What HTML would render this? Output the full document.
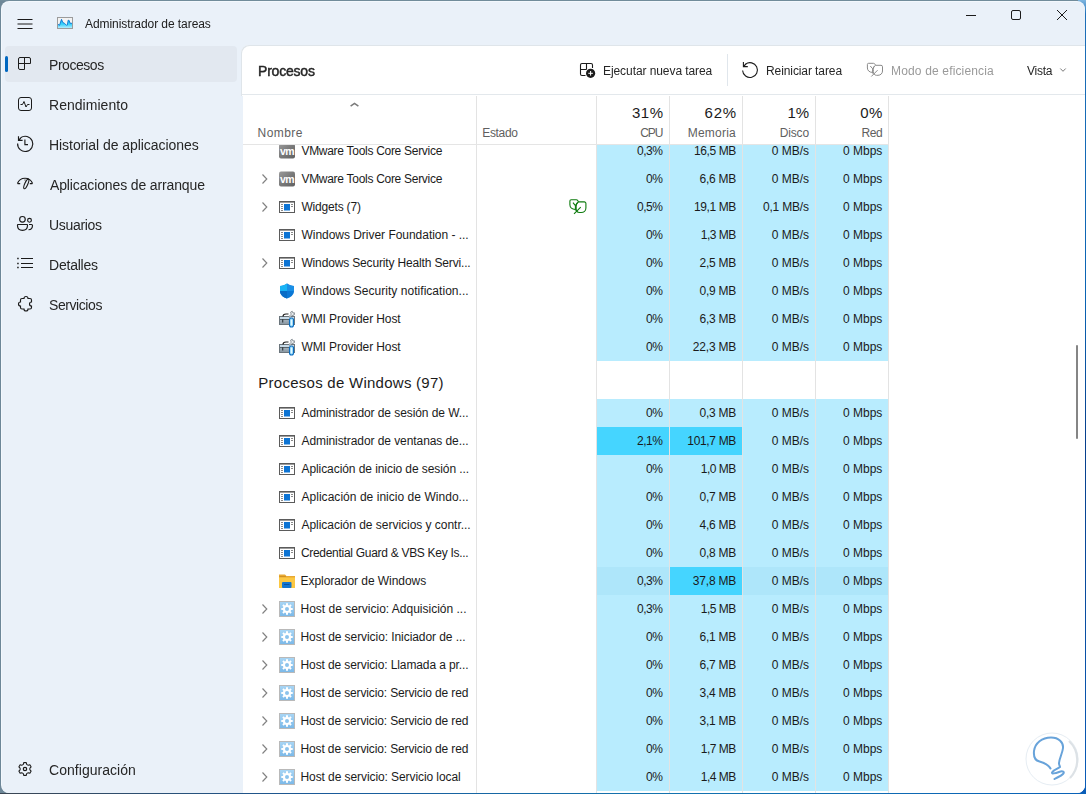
<!DOCTYPE html>
<html><head><meta charset="utf-8"><style>
html,body{margin:0;padding:0;width:1086px;height:794px;overflow:hidden}
body{background:#6d8798;position:relative;font-family:"Liberation Sans",sans-serif}
.t{position:absolute;white-space:pre;font-family:"Liberation Sans",sans-serif}
.a{position:absolute}
svg{position:absolute;overflow:visible}
</style></head><body>
<div class="a" style="left:1070px;top:0;width:16px;height:794px;background:linear-gradient(180deg,#7fb6e0 0px,#1d6fb8 14px,#0a64b4 300px,#073f8c 440px,#0a5cb8 794px)"></div>
<div class="a" style="left:0;top:793px;width:1086px;height:1px;background:linear-gradient(90deg,#3b4652 0%,#1a5a9a 30%,#1474ae 60%,#0a62b8 100%)"></div>
<div class="a" style="left:0;top:0;width:1078px;height:1px;background:#718c9b"></div>
<div class="a" style="left:1px;top:1px;width:1084px;height:792px;background:#f3f8fd;border-radius:8px"></div>
<div class="a" style="left:2px;top:2px;width:1083px;height:791px;background:#eaf1f9;border-radius:7px 8px 8px 7px"></div>
<div class="a" style="left:241px;top:45px;width:844px;height:51px;background:#ffffff;border-top-left-radius:8px;box-shadow:inset 1px 1px 0 #dfe5ea"></div>
<div class="a" style="left:243px;top:95px;width:842px;height:698px;background:#ffffff;border-bottom-right-radius:8px"></div>
<div class="a" style="left:5px;top:46px;width:232px;height:36px;background:#e2e8f0;border-radius:4px"></div>
<div class="a" style="left:5px;top:56px;width:3px;height:16px;background:#0067c0;border-radius:2px"></div>

<div class="a" style="left:597px;top:137px;width:72px;height:28px;background:#b8ecfe"></div>
<div class="a" style="left:670px;top:137px;width:72px;height:28px;background:#b8ecfe"></div>
<div class="a" style="left:743px;top:137px;width:72px;height:28px;background:#b8ecfe"></div>
<div class="a" style="left:816px;top:137px;width:72px;height:28px;background:#b8ecfe"></div>
<div class="a" style="left:597px;top:165px;width:72px;height:28px;background:#b8ecfe"></div>
<div class="a" style="left:670px;top:165px;width:72px;height:28px;background:#b8ecfe"></div>
<div class="a" style="left:743px;top:165px;width:72px;height:28px;background:#b8ecfe"></div>
<div class="a" style="left:816px;top:165px;width:72px;height:28px;background:#b8ecfe"></div>
<div class="a" style="left:597px;top:193px;width:72px;height:28px;background:#b8ecfe"></div>
<div class="a" style="left:670px;top:193px;width:72px;height:28px;background:#b8ecfe"></div>
<div class="a" style="left:743px;top:193px;width:72px;height:28px;background:#b8ecfe"></div>
<div class="a" style="left:816px;top:193px;width:72px;height:28px;background:#b8ecfe"></div>
<div class="a" style="left:597px;top:221px;width:72px;height:28px;background:#b8ecfe"></div>
<div class="a" style="left:670px;top:221px;width:72px;height:28px;background:#b8ecfe"></div>
<div class="a" style="left:743px;top:221px;width:72px;height:28px;background:#b8ecfe"></div>
<div class="a" style="left:816px;top:221px;width:72px;height:28px;background:#b8ecfe"></div>
<div class="a" style="left:597px;top:249px;width:72px;height:28px;background:#b8ecfe"></div>
<div class="a" style="left:670px;top:249px;width:72px;height:28px;background:#b8ecfe"></div>
<div class="a" style="left:743px;top:249px;width:72px;height:28px;background:#b8ecfe"></div>
<div class="a" style="left:816px;top:249px;width:72px;height:28px;background:#b8ecfe"></div>
<div class="a" style="left:597px;top:277px;width:72px;height:28px;background:#b8ecfe"></div>
<div class="a" style="left:670px;top:277px;width:72px;height:28px;background:#b8ecfe"></div>
<div class="a" style="left:743px;top:277px;width:72px;height:28px;background:#b8ecfe"></div>
<div class="a" style="left:816px;top:277px;width:72px;height:28px;background:#b8ecfe"></div>
<div class="a" style="left:597px;top:305px;width:72px;height:28px;background:#b8ecfe"></div>
<div class="a" style="left:670px;top:305px;width:72px;height:28px;background:#b8ecfe"></div>
<div class="a" style="left:743px;top:305px;width:72px;height:28px;background:#b8ecfe"></div>
<div class="a" style="left:816px;top:305px;width:72px;height:28px;background:#b8ecfe"></div>
<div class="a" style="left:597px;top:333px;width:72px;height:28px;background:#b8ecfe"></div>
<div class="a" style="left:670px;top:333px;width:72px;height:28px;background:#b8ecfe"></div>
<div class="a" style="left:743px;top:333px;width:72px;height:28px;background:#b8ecfe"></div>
<div class="a" style="left:816px;top:333px;width:72px;height:28px;background:#b8ecfe"></div>
<div class="a" style="left:597px;top:399px;width:72px;height:28px;background:#b8ecfe"></div>
<div class="a" style="left:670px;top:399px;width:72px;height:28px;background:#b8ecfe"></div>
<div class="a" style="left:743px;top:399px;width:72px;height:28px;background:#b8ecfe"></div>
<div class="a" style="left:816px;top:399px;width:72px;height:28px;background:#b8ecfe"></div>
<div class="a" style="left:597px;top:427px;width:72px;height:28px;background:#45d5ff"></div>
<div class="a" style="left:670px;top:427px;width:72px;height:28px;background:#45d5ff"></div>
<div class="a" style="left:743px;top:427px;width:72px;height:28px;background:#b8ecfe"></div>
<div class="a" style="left:816px;top:427px;width:72px;height:28px;background:#b8ecfe"></div>
<div class="a" style="left:597px;top:455px;width:72px;height:28px;background:#b8ecfe"></div>
<div class="a" style="left:670px;top:455px;width:72px;height:28px;background:#b8ecfe"></div>
<div class="a" style="left:743px;top:455px;width:72px;height:28px;background:#b8ecfe"></div>
<div class="a" style="left:816px;top:455px;width:72px;height:28px;background:#b8ecfe"></div>
<div class="a" style="left:597px;top:483px;width:72px;height:28px;background:#b8ecfe"></div>
<div class="a" style="left:670px;top:483px;width:72px;height:28px;background:#b8ecfe"></div>
<div class="a" style="left:743px;top:483px;width:72px;height:28px;background:#b8ecfe"></div>
<div class="a" style="left:816px;top:483px;width:72px;height:28px;background:#b8ecfe"></div>
<div class="a" style="left:597px;top:511px;width:72px;height:28px;background:#b8ecfe"></div>
<div class="a" style="left:670px;top:511px;width:72px;height:28px;background:#b8ecfe"></div>
<div class="a" style="left:743px;top:511px;width:72px;height:28px;background:#b8ecfe"></div>
<div class="a" style="left:816px;top:511px;width:72px;height:28px;background:#b8ecfe"></div>
<div class="a" style="left:597px;top:539px;width:72px;height:28px;background:#b8ecfe"></div>
<div class="a" style="left:670px;top:539px;width:72px;height:28px;background:#b8ecfe"></div>
<div class="a" style="left:743px;top:539px;width:72px;height:28px;background:#b8ecfe"></div>
<div class="a" style="left:816px;top:539px;width:72px;height:28px;background:#b8ecfe"></div>
<div class="a" style="left:597px;top:567px;width:72px;height:28px;background:#aee6fa"></div>
<div class="a" style="left:670px;top:567px;width:72px;height:28px;background:#45d5ff"></div>
<div class="a" style="left:743px;top:567px;width:72px;height:28px;background:#aee6fa"></div>
<div class="a" style="left:816px;top:567px;width:72px;height:28px;background:#aee6fa"></div>
<div class="a" style="left:597px;top:595px;width:72px;height:28px;background:#b8ecfe"></div>
<div class="a" style="left:670px;top:595px;width:72px;height:28px;background:#b8ecfe"></div>
<div class="a" style="left:743px;top:595px;width:72px;height:28px;background:#b8ecfe"></div>
<div class="a" style="left:816px;top:595px;width:72px;height:28px;background:#b8ecfe"></div>
<div class="a" style="left:597px;top:623px;width:72px;height:28px;background:#b8ecfe"></div>
<div class="a" style="left:670px;top:623px;width:72px;height:28px;background:#b8ecfe"></div>
<div class="a" style="left:743px;top:623px;width:72px;height:28px;background:#b8ecfe"></div>
<div class="a" style="left:816px;top:623px;width:72px;height:28px;background:#b8ecfe"></div>
<div class="a" style="left:597px;top:651px;width:72px;height:28px;background:#b8ecfe"></div>
<div class="a" style="left:670px;top:651px;width:72px;height:28px;background:#b8ecfe"></div>
<div class="a" style="left:743px;top:651px;width:72px;height:28px;background:#b8ecfe"></div>
<div class="a" style="left:816px;top:651px;width:72px;height:28px;background:#b8ecfe"></div>
<div class="a" style="left:597px;top:679px;width:72px;height:28px;background:#b8ecfe"></div>
<div class="a" style="left:670px;top:679px;width:72px;height:28px;background:#b8ecfe"></div>
<div class="a" style="left:743px;top:679px;width:72px;height:28px;background:#b8ecfe"></div>
<div class="a" style="left:816px;top:679px;width:72px;height:28px;background:#b8ecfe"></div>
<div class="a" style="left:597px;top:707px;width:72px;height:28px;background:#b8ecfe"></div>
<div class="a" style="left:670px;top:707px;width:72px;height:28px;background:#b8ecfe"></div>
<div class="a" style="left:743px;top:707px;width:72px;height:28px;background:#b8ecfe"></div>
<div class="a" style="left:816px;top:707px;width:72px;height:28px;background:#b8ecfe"></div>
<div class="a" style="left:597px;top:735px;width:72px;height:28px;background:#b8ecfe"></div>
<div class="a" style="left:670px;top:735px;width:72px;height:28px;background:#b8ecfe"></div>
<div class="a" style="left:743px;top:735px;width:72px;height:28px;background:#b8ecfe"></div>
<div class="a" style="left:816px;top:735px;width:72px;height:28px;background:#b8ecfe"></div>
<div class="a" style="left:597px;top:763px;width:72px;height:28px;background:#b8ecfe"></div>
<div class="a" style="left:670px;top:763px;width:72px;height:28px;background:#b8ecfe"></div>
<div class="a" style="left:743px;top:763px;width:72px;height:28px;background:#b8ecfe"></div>
<div class="a" style="left:816px;top:763px;width:72px;height:28px;background:#b8ecfe"></div>
<div class="a" style="left:476px;top:96px;width:1px;height:697px;background:#e3e3e3"></div>
<div class="a" style="left:596px;top:96px;width:1px;height:697px;background:#e3e3e3"></div>
<div class="a" style="left:669px;top:96px;width:1px;height:697px;background:#e3e3e3"></div>
<div class="a" style="left:742px;top:96px;width:1px;height:697px;background:#e3e3e3"></div>
<div class="a" style="left:815px;top:96px;width:1px;height:697px;background:#e3e3e3"></div>
<div class="a" style="left:888px;top:96px;width:1px;height:697px;background:#e3e3e3"></div>
<svg style="left:279px;top:143px" width="16" height="16" viewBox="279 143 16 16"><defs><linearGradient id="vmg151" x1="0" y1="0" x2="1" y2="1"><stop offset="0" stop-color="#9a9a9a"/><stop offset="0.5" stop-color="#7a7a7a"/><stop offset="1" stop-color="#606060"/></linearGradient></defs>
<rect x="279" y="143.5" width="16" height="15" rx="2" fill="url(#vmg151)"/>
<text x="287" y="154.5" font-family="Liberation Sans" font-weight="700" font-size="10.5" fill="#fff" text-anchor="middle" letter-spacing="-0.6">vm</text></svg>
<svg style="left:258px;top:172px" width="14" height="14" viewBox="258 172 14 14"><path d="M262.5 174.5L266.8 179.0L262.5 183.5" fill="none" stroke="#808080" stroke-width="1.15"/></svg>
<svg style="left:279px;top:171px" width="16" height="16" viewBox="279 171 16 16"><defs><linearGradient id="vmg179" x1="0" y1="0" x2="1" y2="1"><stop offset="0" stop-color="#9a9a9a"/><stop offset="0.5" stop-color="#7a7a7a"/><stop offset="1" stop-color="#606060"/></linearGradient></defs>
<rect x="279" y="171.5" width="16" height="15" rx="2" fill="url(#vmg179)"/>
<text x="287" y="182.5" font-family="Liberation Sans" font-weight="700" font-size="10.5" fill="#fff" text-anchor="middle" letter-spacing="-0.6">vm</text></svg>
<svg style="left:258px;top:200px" width="14" height="14" viewBox="258 200 14 14"><path d="M262.5 202.5L266.8 207.0L262.5 211.5" fill="none" stroke="#808080" stroke-width="1.15"/></svg>
<svg style="left:279px;top:199px" width="16" height="16" viewBox="279 199 16 16"><rect x="279.5" y="201.5" width="15" height="11" fill="#fff" stroke="#5b5b5b" stroke-width="1"/>
<rect x="280" y="201" width="14" height="1.6" fill="#5b5b5b"/>
<rect x="284" y="204" width="6" height="6.5" fill="#0d74d4"/>
<path d="M281 204.5H283M281 206.5H283M281 208.5H283M281 210.5H283M291 204.5H293M291 206.5H293" stroke="#8a8a8a" stroke-width="1"/></svg>
<svg style="left:279px;top:227px" width="16" height="16" viewBox="279 227 16 16"><rect x="279.5" y="229.5" width="15" height="11" fill="#fff" stroke="#5b5b5b" stroke-width="1"/>
<rect x="280" y="229" width="14" height="1.6" fill="#5b5b5b"/>
<rect x="284" y="232" width="6" height="6.5" fill="#0d74d4"/>
<path d="M281 232.5H283M281 234.5H283M281 236.5H283M281 238.5H283M291 232.5H293M291 234.5H293" stroke="#8a8a8a" stroke-width="1"/></svg>
<svg style="left:258px;top:256px" width="14" height="14" viewBox="258 256 14 14"><path d="M262.5 258.5L266.8 263.0L262.5 267.5" fill="none" stroke="#808080" stroke-width="1.15"/></svg>
<svg style="left:279px;top:255px" width="16" height="16" viewBox="279 255 16 16"><rect x="279.5" y="257.5" width="15" height="11" fill="#fff" stroke="#5b5b5b" stroke-width="1"/>
<rect x="280" y="257" width="14" height="1.6" fill="#5b5b5b"/>
<rect x="284" y="260" width="6" height="6.5" fill="#0d74d4"/>
<path d="M281 260.5H283M281 262.5H283M281 264.5H283M281 266.5H283M291 260.5H293M291 262.5H293" stroke="#8a8a8a" stroke-width="1"/></svg>
<svg style="left:279px;top:283px" width="16" height="16" viewBox="279 283 16 16"><path d="M287 283.5C289 285 291.5 286 294 286V291C294 295 290.5 297.5 287 298.5C283.5 297.5 280 295 280 291V286C282.5 286 285 285 287 283.5Z" fill="#0a78d6"/>
<path d="M287 283.5C285 285 282.5 286 280 286V291H287Z" fill="#19b4f5"/>
<path d="M287 283.5C289 285 291.5 286 294 286V291H287Z" fill="#1a8fe6"/>
<path d="M280 291C280 295 283.5 297.5 287 298.5V291Z" fill="#0a6cc6"/></svg>
<svg style="left:279px;top:311px" width="16" height="16" viewBox="279 311 16 16"><defs><linearGradient id="wg319" x1="0" y1="0" x2="0" y2="1"><stop offset="0" stop-color="#b9c6cf"/><stop offset="1" stop-color="#8795a0"/></linearGradient></defs>
<rect x="279.5" y="316.5" width="15" height="8" fill="url(#wg319)" stroke="#6b757c" stroke-width="1"/>
<rect x="280" y="317" width="14" height="2" fill="#c9dbe8"/>
<path d="M280 319.5H294" stroke="#59636a" stroke-width="1"/>
<rect x="282" y="319" width="1.3" height="3.5" fill="#3d454b"/>
<path d="M283 316.5C283 314.8 284.5 314 286 314H288.5" fill="none" stroke="#222" stroke-width="1.2"/>
<path d="M288.8 316.8L291.2 314.2L290.6 312.2L292.2 311.2L293 313L294.5 312.8L294.2 315L292 315.6L289.8 317.6Z" fill="#e9edf0" stroke="#737c83" stroke-width="0.8"/>
<rect x="289.5" y="318" width="4" height="9" rx="2" fill="#a8e3fb" stroke="#0a6cc0" stroke-width="1.1"/>
<rect x="291" y="320" width="1" height="5" fill="#e6f8ff"/></svg>
<svg style="left:279px;top:339px" width="16" height="16" viewBox="279 339 16 16"><defs><linearGradient id="wg347" x1="0" y1="0" x2="0" y2="1"><stop offset="0" stop-color="#b9c6cf"/><stop offset="1" stop-color="#8795a0"/></linearGradient></defs>
<rect x="279.5" y="344.5" width="15" height="8" fill="url(#wg347)" stroke="#6b757c" stroke-width="1"/>
<rect x="280" y="345" width="14" height="2" fill="#c9dbe8"/>
<path d="M280 347.5H294" stroke="#59636a" stroke-width="1"/>
<rect x="282" y="347" width="1.3" height="3.5" fill="#3d454b"/>
<path d="M283 344.5C283 342.8 284.5 342 286 342H288.5" fill="none" stroke="#222" stroke-width="1.2"/>
<path d="M288.8 344.8L291.2 342.2L290.6 340.2L292.2 339.2L293 341L294.5 340.8L294.2 343L292 343.6L289.8 345.6Z" fill="#e9edf0" stroke="#737c83" stroke-width="0.8"/>
<rect x="289.5" y="346" width="4" height="9" rx="2" fill="#a8e3fb" stroke="#0a6cc0" stroke-width="1.1"/>
<rect x="291" y="348" width="1" height="5" fill="#e6f8ff"/></svg>
<svg style="left:279px;top:405px" width="16" height="16" viewBox="279 405 16 16"><rect x="279.5" y="407.5" width="15" height="11" fill="#fff" stroke="#5b5b5b" stroke-width="1"/>
<rect x="280" y="407" width="14" height="1.6" fill="#5b5b5b"/>
<rect x="284" y="410" width="6" height="6.5" fill="#0d74d4"/>
<path d="M281 410.5H283M281 412.5H283M281 414.5H283M281 416.5H283M291 410.5H293M291 412.5H293" stroke="#8a8a8a" stroke-width="1"/></svg>
<svg style="left:279px;top:433px" width="16" height="16" viewBox="279 433 16 16"><rect x="279.5" y="435.5" width="15" height="11" fill="#fff" stroke="#5b5b5b" stroke-width="1"/>
<rect x="280" y="435" width="14" height="1.6" fill="#5b5b5b"/>
<rect x="284" y="438" width="6" height="6.5" fill="#0d74d4"/>
<path d="M281 438.5H283M281 440.5H283M281 442.5H283M281 444.5H283M291 438.5H293M291 440.5H293" stroke="#8a8a8a" stroke-width="1"/></svg>
<svg style="left:279px;top:461px" width="16" height="16" viewBox="279 461 16 16"><rect x="279.5" y="463.5" width="15" height="11" fill="#fff" stroke="#5b5b5b" stroke-width="1"/>
<rect x="280" y="463" width="14" height="1.6" fill="#5b5b5b"/>
<rect x="284" y="466" width="6" height="6.5" fill="#0d74d4"/>
<path d="M281 466.5H283M281 468.5H283M281 470.5H283M281 472.5H283M291 466.5H293M291 468.5H293" stroke="#8a8a8a" stroke-width="1"/></svg>
<svg style="left:279px;top:489px" width="16" height="16" viewBox="279 489 16 16"><rect x="279.5" y="491.5" width="15" height="11" fill="#fff" stroke="#5b5b5b" stroke-width="1"/>
<rect x="280" y="491" width="14" height="1.6" fill="#5b5b5b"/>
<rect x="284" y="494" width="6" height="6.5" fill="#0d74d4"/>
<path d="M281 494.5H283M281 496.5H283M281 498.5H283M281 500.5H283M291 494.5H293M291 496.5H293" stroke="#8a8a8a" stroke-width="1"/></svg>
<svg style="left:279px;top:517px" width="16" height="16" viewBox="279 517 16 16"><rect x="279.5" y="519.5" width="15" height="11" fill="#fff" stroke="#5b5b5b" stroke-width="1"/>
<rect x="280" y="519" width="14" height="1.6" fill="#5b5b5b"/>
<rect x="284" y="522" width="6" height="6.5" fill="#0d74d4"/>
<path d="M281 522.5H283M281 524.5H283M281 526.5H283M281 528.5H283M291 522.5H293M291 524.5H293" stroke="#8a8a8a" stroke-width="1"/></svg>
<svg style="left:279px;top:545px" width="16" height="16" viewBox="279 545 16 16"><rect x="279.5" y="547.5" width="15" height="11" fill="#fff" stroke="#5b5b5b" stroke-width="1"/>
<rect x="280" y="547" width="14" height="1.6" fill="#5b5b5b"/>
<rect x="284" y="550" width="6" height="6.5" fill="#0d74d4"/>
<path d="M281 550.5H283M281 552.5H283M281 554.5H283M281 556.5H283M291 550.5H293M291 552.5H293" stroke="#8a8a8a" stroke-width="1"/></svg>
<svg style="left:279px;top:573px" width="16" height="16" viewBox="279 573 16 16"><path d="M279 574.5H285L286.5 576H295V588H279Z" fill="#e8a934"/>
<path d="M279 577.5H295V588H279Z" fill="#fcc843"/>
<rect x="279.5" y="576" width="6.5" height="0.8" fill="#c98a20"/>
<rect x="282" y="582" width="9.5" height="6" rx="1" fill="#1375d0"/>
<rect x="284" y="584" width="5.5" height="0.9" fill="#0a4f9a"/></svg>
<svg style="left:258px;top:602px" width="14" height="14" viewBox="258 602 14 14"><path d="M262.5 604.5L266.8 609.0L262.5 613.5" fill="none" stroke="#808080" stroke-width="1.15"/></svg>
<svg style="left:279px;top:601px" width="16" height="16" viewBox="279 601 16 16"><defs><linearGradient id="gg609" x1="0" y1="0" x2="0" y2="1"><stop offset="0" stop-color="#a9d6f5"/><stop offset="1" stop-color="#7ab8e8"/></linearGradient></defs>
<rect x="279.5" y="601.5" width="15" height="15" fill="url(#gg609)" stroke="#b9b9b9" stroke-width="1"/>
<path d="M286.00 603.29 L288.00 603.29 L287.98 604.92 L289.19 605.42 L290.34 604.25 L291.75 605.66 L290.58 606.81 L291.08 608.02 L292.71 608.00 L292.71 610.00 L291.08 609.98 L290.58 611.19 L291.75 612.34 L290.34 613.75 L289.19 612.58 L287.98 613.08 L288.00 614.71 L286.00 614.71 L286.02 613.08 L284.81 612.58 L283.66 613.75 L282.25 612.34 L283.42 611.19 L282.92 609.98 L281.29 610.00 L281.29 608.00 L282.92 608.02 L283.42 606.81 L282.25 605.66 L283.66 604.25 L284.81 605.42 L286.02 604.92Z" fill="#fff"/><circle cx="287" cy="609" r="2" fill="#8cc3ec"/></svg>
<svg style="left:258px;top:630px" width="14" height="14" viewBox="258 630 14 14"><path d="M262.5 632.5L266.8 637.0L262.5 641.5" fill="none" stroke="#808080" stroke-width="1.15"/></svg>
<svg style="left:279px;top:629px" width="16" height="16" viewBox="279 629 16 16"><defs><linearGradient id="gg637" x1="0" y1="0" x2="0" y2="1"><stop offset="0" stop-color="#a9d6f5"/><stop offset="1" stop-color="#7ab8e8"/></linearGradient></defs>
<rect x="279.5" y="629.5" width="15" height="15" fill="url(#gg637)" stroke="#b9b9b9" stroke-width="1"/>
<path d="M286.00 631.29 L288.00 631.29 L287.98 632.92 L289.19 633.42 L290.34 632.25 L291.75 633.66 L290.58 634.81 L291.08 636.02 L292.71 636.00 L292.71 638.00 L291.08 637.98 L290.58 639.19 L291.75 640.34 L290.34 641.75 L289.19 640.58 L287.98 641.08 L288.00 642.71 L286.00 642.71 L286.02 641.08 L284.81 640.58 L283.66 641.75 L282.25 640.34 L283.42 639.19 L282.92 637.98 L281.29 638.00 L281.29 636.00 L282.92 636.02 L283.42 634.81 L282.25 633.66 L283.66 632.25 L284.81 633.42 L286.02 632.92Z" fill="#fff"/><circle cx="287" cy="637" r="2" fill="#8cc3ec"/></svg>
<svg style="left:258px;top:658px" width="14" height="14" viewBox="258 658 14 14"><path d="M262.5 660.5L266.8 665.0L262.5 669.5" fill="none" stroke="#808080" stroke-width="1.15"/></svg>
<svg style="left:279px;top:657px" width="16" height="16" viewBox="279 657 16 16"><defs><linearGradient id="gg665" x1="0" y1="0" x2="0" y2="1"><stop offset="0" stop-color="#a9d6f5"/><stop offset="1" stop-color="#7ab8e8"/></linearGradient></defs>
<rect x="279.5" y="657.5" width="15" height="15" fill="url(#gg665)" stroke="#b9b9b9" stroke-width="1"/>
<path d="M286.00 659.29 L288.00 659.29 L287.98 660.92 L289.19 661.42 L290.34 660.25 L291.75 661.66 L290.58 662.81 L291.08 664.02 L292.71 664.00 L292.71 666.00 L291.08 665.98 L290.58 667.19 L291.75 668.34 L290.34 669.75 L289.19 668.58 L287.98 669.08 L288.00 670.71 L286.00 670.71 L286.02 669.08 L284.81 668.58 L283.66 669.75 L282.25 668.34 L283.42 667.19 L282.92 665.98 L281.29 666.00 L281.29 664.00 L282.92 664.02 L283.42 662.81 L282.25 661.66 L283.66 660.25 L284.81 661.42 L286.02 660.92Z" fill="#fff"/><circle cx="287" cy="665" r="2" fill="#8cc3ec"/></svg>
<svg style="left:258px;top:686px" width="14" height="14" viewBox="258 686 14 14"><path d="M262.5 688.5L266.8 693.0L262.5 697.5" fill="none" stroke="#808080" stroke-width="1.15"/></svg>
<svg style="left:279px;top:685px" width="16" height="16" viewBox="279 685 16 16"><defs><linearGradient id="gg693" x1="0" y1="0" x2="0" y2="1"><stop offset="0" stop-color="#a9d6f5"/><stop offset="1" stop-color="#7ab8e8"/></linearGradient></defs>
<rect x="279.5" y="685.5" width="15" height="15" fill="url(#gg693)" stroke="#b9b9b9" stroke-width="1"/>
<path d="M286.00 687.29 L288.00 687.29 L287.98 688.92 L289.19 689.42 L290.34 688.25 L291.75 689.66 L290.58 690.81 L291.08 692.02 L292.71 692.00 L292.71 694.00 L291.08 693.98 L290.58 695.19 L291.75 696.34 L290.34 697.75 L289.19 696.58 L287.98 697.08 L288.00 698.71 L286.00 698.71 L286.02 697.08 L284.81 696.58 L283.66 697.75 L282.25 696.34 L283.42 695.19 L282.92 693.98 L281.29 694.00 L281.29 692.00 L282.92 692.02 L283.42 690.81 L282.25 689.66 L283.66 688.25 L284.81 689.42 L286.02 688.92Z" fill="#fff"/><circle cx="287" cy="693" r="2" fill="#8cc3ec"/></svg>
<svg style="left:258px;top:714px" width="14" height="14" viewBox="258 714 14 14"><path d="M262.5 716.5L266.8 721.0L262.5 725.5" fill="none" stroke="#808080" stroke-width="1.15"/></svg>
<svg style="left:279px;top:713px" width="16" height="16" viewBox="279 713 16 16"><defs><linearGradient id="gg721" x1="0" y1="0" x2="0" y2="1"><stop offset="0" stop-color="#a9d6f5"/><stop offset="1" stop-color="#7ab8e8"/></linearGradient></defs>
<rect x="279.5" y="713.5" width="15" height="15" fill="url(#gg721)" stroke="#b9b9b9" stroke-width="1"/>
<path d="M286.00 715.29 L288.00 715.29 L287.98 716.92 L289.19 717.42 L290.34 716.25 L291.75 717.66 L290.58 718.81 L291.08 720.02 L292.71 720.00 L292.71 722.00 L291.08 721.98 L290.58 723.19 L291.75 724.34 L290.34 725.75 L289.19 724.58 L287.98 725.08 L288.00 726.71 L286.00 726.71 L286.02 725.08 L284.81 724.58 L283.66 725.75 L282.25 724.34 L283.42 723.19 L282.92 721.98 L281.29 722.00 L281.29 720.00 L282.92 720.02 L283.42 718.81 L282.25 717.66 L283.66 716.25 L284.81 717.42 L286.02 716.92Z" fill="#fff"/><circle cx="287" cy="721" r="2" fill="#8cc3ec"/></svg>
<svg style="left:258px;top:742px" width="14" height="14" viewBox="258 742 14 14"><path d="M262.5 744.5L266.8 749.0L262.5 753.5" fill="none" stroke="#808080" stroke-width="1.15"/></svg>
<svg style="left:279px;top:741px" width="16" height="16" viewBox="279 741 16 16"><defs><linearGradient id="gg749" x1="0" y1="0" x2="0" y2="1"><stop offset="0" stop-color="#a9d6f5"/><stop offset="1" stop-color="#7ab8e8"/></linearGradient></defs>
<rect x="279.5" y="741.5" width="15" height="15" fill="url(#gg749)" stroke="#b9b9b9" stroke-width="1"/>
<path d="M286.00 743.29 L288.00 743.29 L287.98 744.92 L289.19 745.42 L290.34 744.25 L291.75 745.66 L290.58 746.81 L291.08 748.02 L292.71 748.00 L292.71 750.00 L291.08 749.98 L290.58 751.19 L291.75 752.34 L290.34 753.75 L289.19 752.58 L287.98 753.08 L288.00 754.71 L286.00 754.71 L286.02 753.08 L284.81 752.58 L283.66 753.75 L282.25 752.34 L283.42 751.19 L282.92 749.98 L281.29 750.00 L281.29 748.00 L282.92 748.02 L283.42 746.81 L282.25 745.66 L283.66 744.25 L284.81 745.42 L286.02 744.92Z" fill="#fff"/><circle cx="287" cy="749" r="2" fill="#8cc3ec"/></svg>
<svg style="left:258px;top:770px" width="14" height="14" viewBox="258 770 14 14"><path d="M262.5 772.5L266.8 777.0L262.5 781.5" fill="none" stroke="#808080" stroke-width="1.15"/></svg>
<svg style="left:279px;top:769px" width="16" height="16" viewBox="279 769 16 16"><defs><linearGradient id="gg777" x1="0" y1="0" x2="0" y2="1"><stop offset="0" stop-color="#a9d6f5"/><stop offset="1" stop-color="#7ab8e8"/></linearGradient></defs>
<rect x="279.5" y="769.5" width="15" height="15" fill="url(#gg777)" stroke="#b9b9b9" stroke-width="1"/>
<path d="M286.00 771.29 L288.00 771.29 L287.98 772.92 L289.19 773.42 L290.34 772.25 L291.75 773.66 L290.58 774.81 L291.08 776.02 L292.71 776.00 L292.71 778.00 L291.08 777.98 L290.58 779.19 L291.75 780.34 L290.34 781.75 L289.19 780.58 L287.98 781.08 L288.00 782.71 L286.00 782.71 L286.02 781.08 L284.81 780.58 L283.66 781.75 L282.25 780.34 L283.42 779.19 L282.92 777.98 L281.29 778.00 L281.29 776.00 L282.92 776.02 L283.42 774.81 L282.25 773.66 L283.66 772.25 L284.81 773.42 L286.02 772.92Z" fill="#fff"/><circle cx="287" cy="777" r="2" fill="#8cc3ec"/></svg>
<svg style="left:566px;top:196px" width="24" height="20" viewBox="566 196 24 20"><g transform="translate(569.9 199.8) scale(1.06) translate(-867.4 -63.3)"><path d="M875.5 65.3H881A1.5 1.5 0 0 1 882.5 66.8V71C882.5 73.5 880.5 75.3 878 75.3H876.5C874.5 75.3 873.3 73.5 873.3 71.5V69.5C873.3 67.5 874 66 875.5 65.3Z" fill="none" stroke="#0f7b0f" stroke-width="1.05"/><path d="M872.5 72.4C869.5 72.4 867.4 70.5 867.4 68V64.5A1.2 1.2 0 0 1 868.6 63.3H873.5C874.5 63.3 875 64 875.5 65.3" fill="none" stroke="#0f7b0f" stroke-width="1.05"/><path d="M870.3 66L872.6 68.7M874.5 66.3L872.6 68.7V73.5M871.3 76.5L877.6 70.2" fill="none" stroke="#0f7b0f" stroke-width="1.05"/></g></svg>
<div class="t" style="left:301.44px;top:145px;font-size:12px;line-height:12px;color:#1b1b1b;letter-spacing:-0.289px">VMware Tools Core Service</div>
<div class="t" style="left:637.06px;top:145px;font-size:12px;line-height:12px;color:#1b1b1b;letter-spacing:-0.500px">0,3%</div>
<div class="t" style="left:694.03px;top:145px;font-size:12px;line-height:12px;color:#1b1b1b;letter-spacing:-0.400px">16,5 MB</div>
<div class="t" style="left:771.67px;top:145px;font-size:12px;line-height:12px;color:#1b1b1b;letter-spacing:-0.000px">0 MB/s</div>
<div class="t" style="left:842.96px;top:145px;font-size:12px;line-height:12px;color:#1b1b1b;letter-spacing:-0.000px">0 Mbps</div>
<div class="t" style="left:301.44px;top:173px;font-size:12px;line-height:12px;color:#1b1b1b;letter-spacing:-0.289px">VMware Tools Core Service</div>
<div class="t" style="left:645.88px;top:173px;font-size:12px;line-height:12px;color:#1b1b1b;letter-spacing:-0.300px">0%</div>
<div class="t" style="left:699.52px;top:173px;font-size:12px;line-height:12px;color:#1b1b1b;letter-spacing:-0.240px">6,6 MB</div>
<div class="t" style="left:771.67px;top:173px;font-size:12px;line-height:12px;color:#1b1b1b;letter-spacing:-0.000px">0 MB/s</div>
<div class="t" style="left:842.96px;top:173px;font-size:12px;line-height:12px;color:#1b1b1b;letter-spacing:-0.000px">0 Mbps</div>
<div class="t" style="left:301.44px;top:201px;font-size:12px;line-height:12px;color:#1b1b1b;letter-spacing:-0.187px">Widgets (7)</div>
<div class="t" style="left:637.06px;top:201px;font-size:12px;line-height:12px;color:#1b1b1b;letter-spacing:-0.500px">0,5%</div>
<div class="t" style="left:694.03px;top:201px;font-size:12px;line-height:12px;color:#1b1b1b;letter-spacing:-0.400px">19,1 MB</div>
<div class="t" style="left:762.88px;top:201px;font-size:12px;line-height:12px;color:#1b1b1b;letter-spacing:-0.171px">0,1 MB/s</div>
<div class="t" style="left:842.96px;top:201px;font-size:12px;line-height:12px;color:#1b1b1b;letter-spacing:-0.000px">0 Mbps</div>
<div class="t" style="left:301.44px;top:229px;font-size:12px;line-height:12px;color:#1b1b1b;letter-spacing:-0.027px">Windows Driver Foundation - ...</div>
<div class="t" style="left:645.88px;top:229px;font-size:12px;line-height:12px;color:#1b1b1b;letter-spacing:-0.300px">0%</div>
<div class="t" style="left:700.72px;top:229px;font-size:12px;line-height:12px;color:#1b1b1b;letter-spacing:-0.480px">1,3 MB</div>
<div class="t" style="left:771.67px;top:229px;font-size:12px;line-height:12px;color:#1b1b1b;letter-spacing:-0.000px">0 MB/s</div>
<div class="t" style="left:842.96px;top:229px;font-size:12px;line-height:12px;color:#1b1b1b;letter-spacing:-0.000px">0 Mbps</div>
<div class="t" style="left:301.44px;top:257px;font-size:12px;line-height:12px;color:#1b1b1b;letter-spacing:-0.155px">Windows Security Health Servi...</div>
<div class="t" style="left:645.88px;top:257px;font-size:12px;line-height:12px;color:#1b1b1b;letter-spacing:-0.300px">0%</div>
<div class="t" style="left:699.52px;top:257px;font-size:12px;line-height:12px;color:#1b1b1b;letter-spacing:-0.240px">2,5 MB</div>
<div class="t" style="left:771.67px;top:257px;font-size:12px;line-height:12px;color:#1b1b1b;letter-spacing:-0.000px">0 MB/s</div>
<div class="t" style="left:842.96px;top:257px;font-size:12px;line-height:12px;color:#1b1b1b;letter-spacing:-0.000px">0 Mbps</div>
<div class="t" style="left:301.44px;top:285px;font-size:12px;line-height:12px;color:#1b1b1b;letter-spacing:0.037px">Windows Security notification...</div>
<div class="t" style="left:645.88px;top:285px;font-size:12px;line-height:12px;color:#1b1b1b;letter-spacing:-0.300px">0%</div>
<div class="t" style="left:699.52px;top:285px;font-size:12px;line-height:12px;color:#1b1b1b;letter-spacing:-0.240px">0,9 MB</div>
<div class="t" style="left:771.67px;top:285px;font-size:12px;line-height:12px;color:#1b1b1b;letter-spacing:-0.000px">0 MB/s</div>
<div class="t" style="left:842.96px;top:285px;font-size:12px;line-height:12px;color:#1b1b1b;letter-spacing:-0.000px">0 Mbps</div>
<div class="t" style="left:301.44px;top:313px;font-size:12px;line-height:12px;color:#1b1b1b;letter-spacing:-0.089px">WMI Provider Host</div>
<div class="t" style="left:645.88px;top:313px;font-size:12px;line-height:12px;color:#1b1b1b;letter-spacing:-0.300px">0%</div>
<div class="t" style="left:699.52px;top:313px;font-size:12px;line-height:12px;color:#1b1b1b;letter-spacing:-0.240px">6,3 MB</div>
<div class="t" style="left:771.67px;top:313px;font-size:12px;line-height:12px;color:#1b1b1b;letter-spacing:-0.000px">0 MB/s</div>
<div class="t" style="left:842.96px;top:313px;font-size:12px;line-height:12px;color:#1b1b1b;letter-spacing:-0.000px">0 Mbps</div>
<div class="t" style="left:301.44px;top:341px;font-size:12px;line-height:12px;color:#1b1b1b;letter-spacing:-0.089px">WMI Provider Host</div>
<div class="t" style="left:645.88px;top:341px;font-size:12px;line-height:12px;color:#1b1b1b;letter-spacing:-0.300px">0%</div>
<div class="t" style="left:692.83px;top:341px;font-size:12px;line-height:12px;color:#1b1b1b;letter-spacing:-0.200px">22,3 MB</div>
<div class="t" style="left:771.67px;top:341px;font-size:12px;line-height:12px;color:#1b1b1b;letter-spacing:-0.000px">0 MB/s</div>
<div class="t" style="left:842.96px;top:341px;font-size:12px;line-height:12px;color:#1b1b1b;letter-spacing:-0.000px">0 Mbps</div>
<div class="t" style="left:301.47px;top:407px;font-size:12px;line-height:12px;color:#1b1b1b;letter-spacing:-0.077px">Administrador de sesión de W...</div>
<div class="t" style="left:645.88px;top:407px;font-size:12px;line-height:12px;color:#1b1b1b;letter-spacing:-0.300px">0%</div>
<div class="t" style="left:699.52px;top:407px;font-size:12px;line-height:12px;color:#1b1b1b;letter-spacing:-0.240px">0,3 MB</div>
<div class="t" style="left:771.67px;top:407px;font-size:12px;line-height:12px;color:#1b1b1b;letter-spacing:-0.000px">0 MB/s</div>
<div class="t" style="left:842.96px;top:407px;font-size:12px;line-height:12px;color:#1b1b1b;letter-spacing:-0.000px">0 Mbps</div>
<div class="t" style="left:301.47px;top:435px;font-size:12px;line-height:12px;color:#1b1b1b;letter-spacing:-0.078px">Administrador de ventanas de...</div>
<div class="t" style="left:637.06px;top:435px;font-size:12px;line-height:12px;color:#1b1b1b;letter-spacing:-0.500px">2,1%</div>
<div class="t" style="left:687.37px;top:435px;font-size:12px;line-height:12px;color:#1b1b1b;letter-spacing:-0.343px">101,7 MB</div>
<div class="t" style="left:771.67px;top:435px;font-size:12px;line-height:12px;color:#1b1b1b;letter-spacing:-0.000px">0 MB/s</div>
<div class="t" style="left:842.96px;top:435px;font-size:12px;line-height:12px;color:#1b1b1b;letter-spacing:-0.000px">0 Mbps</div>
<div class="t" style="left:301.47px;top:463px;font-size:12px;line-height:12px;color:#1b1b1b;letter-spacing:-0.072px">Aplicación de inicio de sesión ...</div>
<div class="t" style="left:645.88px;top:463px;font-size:12px;line-height:12px;color:#1b1b1b;letter-spacing:-0.300px">0%</div>
<div class="t" style="left:700.72px;top:463px;font-size:12px;line-height:12px;color:#1b1b1b;letter-spacing:-0.480px">1,0 MB</div>
<div class="t" style="left:771.67px;top:463px;font-size:12px;line-height:12px;color:#1b1b1b;letter-spacing:-0.000px">0 MB/s</div>
<div class="t" style="left:842.96px;top:463px;font-size:12px;line-height:12px;color:#1b1b1b;letter-spacing:-0.000px">0 Mbps</div>
<div class="t" style="left:301.47px;top:491px;font-size:12px;line-height:12px;color:#1b1b1b;letter-spacing:0.036px">Aplicación de inicio de Windo...</div>
<div class="t" style="left:645.88px;top:491px;font-size:12px;line-height:12px;color:#1b1b1b;letter-spacing:-0.300px">0%</div>
<div class="t" style="left:699.52px;top:491px;font-size:12px;line-height:12px;color:#1b1b1b;letter-spacing:-0.240px">0,7 MB</div>
<div class="t" style="left:771.67px;top:491px;font-size:12px;line-height:12px;color:#1b1b1b;letter-spacing:-0.000px">0 MB/s</div>
<div class="t" style="left:842.96px;top:491px;font-size:12px;line-height:12px;color:#1b1b1b;letter-spacing:-0.000px">0 Mbps</div>
<div class="t" style="left:301.47px;top:519px;font-size:12px;line-height:12px;color:#1b1b1b;letter-spacing:-0.026px">Aplicación de servicios y contr...</div>
<div class="t" style="left:645.88px;top:519px;font-size:12px;line-height:12px;color:#1b1b1b;letter-spacing:-0.300px">0%</div>
<div class="t" style="left:699.52px;top:519px;font-size:12px;line-height:12px;color:#1b1b1b;letter-spacing:-0.240px">4,6 MB</div>
<div class="t" style="left:771.67px;top:519px;font-size:12px;line-height:12px;color:#1b1b1b;letter-spacing:-0.000px">0 MB/s</div>
<div class="t" style="left:842.96px;top:519px;font-size:12px;line-height:12px;color:#1b1b1b;letter-spacing:-0.000px">0 Mbps</div>
<div class="t" style="left:300.90px;top:547px;font-size:12px;line-height:12px;color:#1b1b1b;letter-spacing:-0.290px">Credential Guard &amp; VBS Key Is...</div>
<div class="t" style="left:645.88px;top:547px;font-size:12px;line-height:12px;color:#1b1b1b;letter-spacing:-0.300px">0%</div>
<div class="t" style="left:699.52px;top:547px;font-size:12px;line-height:12px;color:#1b1b1b;letter-spacing:-0.240px">0,8 MB</div>
<div class="t" style="left:771.67px;top:547px;font-size:12px;line-height:12px;color:#1b1b1b;letter-spacing:-0.000px">0 MB/s</div>
<div class="t" style="left:842.96px;top:547px;font-size:12px;line-height:12px;color:#1b1b1b;letter-spacing:-0.000px">0 Mbps</div>
<div class="t" style="left:300.51px;top:575px;font-size:12px;line-height:12px;color:#1b1b1b;letter-spacing:-0.051px">Explorador de Windows</div>
<div class="t" style="left:637.06px;top:575px;font-size:12px;line-height:12px;color:#1b1b1b;letter-spacing:-0.500px">0,3%</div>
<div class="t" style="left:692.83px;top:575px;font-size:12px;line-height:12px;color:#1b1b1b;letter-spacing:-0.200px">37,8 MB</div>
<div class="t" style="left:771.67px;top:575px;font-size:12px;line-height:12px;color:#1b1b1b;letter-spacing:-0.000px">0 MB/s</div>
<div class="t" style="left:842.96px;top:575px;font-size:12px;line-height:12px;color:#1b1b1b;letter-spacing:-0.000px">0 Mbps</div>
<div class="t" style="left:300.51px;top:603px;font-size:12px;line-height:12px;color:#1b1b1b;letter-spacing:-0.003px">Host de servicio: Adquisición ...</div>
<div class="t" style="left:637.06px;top:603px;font-size:12px;line-height:12px;color:#1b1b1b;letter-spacing:-0.500px">0,3%</div>
<div class="t" style="left:700.72px;top:603px;font-size:12px;line-height:12px;color:#1b1b1b;letter-spacing:-0.480px">1,5 MB</div>
<div class="t" style="left:771.67px;top:603px;font-size:12px;line-height:12px;color:#1b1b1b;letter-spacing:-0.000px">0 MB/s</div>
<div class="t" style="left:842.96px;top:603px;font-size:12px;line-height:12px;color:#1b1b1b;letter-spacing:-0.000px">0 Mbps</div>
<div class="t" style="left:300.51px;top:631px;font-size:12px;line-height:12px;color:#1b1b1b;letter-spacing:-0.071px">Host de servicio: Iniciador de ...</div>
<div class="t" style="left:645.88px;top:631px;font-size:12px;line-height:12px;color:#1b1b1b;letter-spacing:-0.300px">0%</div>
<div class="t" style="left:699.52px;top:631px;font-size:12px;line-height:12px;color:#1b1b1b;letter-spacing:-0.240px">6,1 MB</div>
<div class="t" style="left:771.67px;top:631px;font-size:12px;line-height:12px;color:#1b1b1b;letter-spacing:-0.000px">0 MB/s</div>
<div class="t" style="left:842.96px;top:631px;font-size:12px;line-height:12px;color:#1b1b1b;letter-spacing:-0.000px">0 Mbps</div>
<div class="t" style="left:300.51px;top:659px;font-size:12px;line-height:12px;color:#1b1b1b;letter-spacing:-0.102px">Host de servicio: Llamada a pr...</div>
<div class="t" style="left:645.88px;top:659px;font-size:12px;line-height:12px;color:#1b1b1b;letter-spacing:-0.300px">0%</div>
<div class="t" style="left:699.52px;top:659px;font-size:12px;line-height:12px;color:#1b1b1b;letter-spacing:-0.240px">6,7 MB</div>
<div class="t" style="left:771.67px;top:659px;font-size:12px;line-height:12px;color:#1b1b1b;letter-spacing:-0.000px">0 MB/s</div>
<div class="t" style="left:842.96px;top:659px;font-size:12px;line-height:12px;color:#1b1b1b;letter-spacing:-0.000px">0 Mbps</div>
<div class="t" style="left:300.51px;top:687px;font-size:12px;line-height:12px;color:#1b1b1b;letter-spacing:-0.132px">Host de servicio: Servicio de red</div>
<div class="t" style="left:645.88px;top:687px;font-size:12px;line-height:12px;color:#1b1b1b;letter-spacing:-0.300px">0%</div>
<div class="t" style="left:699.52px;top:687px;font-size:12px;line-height:12px;color:#1b1b1b;letter-spacing:-0.240px">3,4 MB</div>
<div class="t" style="left:771.67px;top:687px;font-size:12px;line-height:12px;color:#1b1b1b;letter-spacing:-0.000px">0 MB/s</div>
<div class="t" style="left:842.96px;top:687px;font-size:12px;line-height:12px;color:#1b1b1b;letter-spacing:-0.000px">0 Mbps</div>
<div class="t" style="left:300.51px;top:715px;font-size:12px;line-height:12px;color:#1b1b1b;letter-spacing:-0.132px">Host de servicio: Servicio de red</div>
<div class="t" style="left:645.88px;top:715px;font-size:12px;line-height:12px;color:#1b1b1b;letter-spacing:-0.300px">0%</div>
<div class="t" style="left:699.52px;top:715px;font-size:12px;line-height:12px;color:#1b1b1b;letter-spacing:-0.240px">3,1 MB</div>
<div class="t" style="left:771.67px;top:715px;font-size:12px;line-height:12px;color:#1b1b1b;letter-spacing:-0.000px">0 MB/s</div>
<div class="t" style="left:842.96px;top:715px;font-size:12px;line-height:12px;color:#1b1b1b;letter-spacing:-0.000px">0 Mbps</div>
<div class="t" style="left:300.51px;top:743px;font-size:12px;line-height:12px;color:#1b1b1b;letter-spacing:-0.132px">Host de servicio: Servicio de red</div>
<div class="t" style="left:645.88px;top:743px;font-size:12px;line-height:12px;color:#1b1b1b;letter-spacing:-0.300px">0%</div>
<div class="t" style="left:700.72px;top:743px;font-size:12px;line-height:12px;color:#1b1b1b;letter-spacing:-0.480px">1,7 MB</div>
<div class="t" style="left:771.67px;top:743px;font-size:12px;line-height:12px;color:#1b1b1b;letter-spacing:-0.000px">0 MB/s</div>
<div class="t" style="left:842.96px;top:743px;font-size:12px;line-height:12px;color:#1b1b1b;letter-spacing:-0.000px">0 Mbps</div>
<div class="t" style="left:300.51px;top:771px;font-size:12px;line-height:12px;color:#1b1b1b;letter-spacing:-0.082px">Host de servicio: Servicio local</div>
<div class="t" style="left:645.88px;top:771px;font-size:12px;line-height:12px;color:#1b1b1b;letter-spacing:-0.300px">0%</div>
<div class="t" style="left:700.72px;top:771px;font-size:12px;line-height:12px;color:#1b1b1b;letter-spacing:-0.480px">1,4 MB</div>
<div class="t" style="left:771.67px;top:771px;font-size:12px;line-height:12px;color:#1b1b1b;letter-spacing:-0.000px">0 MB/s</div>
<div class="t" style="left:842.96px;top:771px;font-size:12px;line-height:12px;color:#1b1b1b;letter-spacing:-0.000px">0 Mbps</div>
<div class="a" style="left:243px;top:95px;width:842px;height:49px;background:#fff"></div>
<div class="a" style="left:242px;top:94px;width:843px;height:1px;background:#e3e8ec"></div>
<div class="a" style="left:727px;top:54px;width:1px;height:32px;background:#e0e6ec"></div>
<div class="a" style="left:476px;top:96px;width:1px;height:48px;background:#e3e3e3"></div>
<div class="a" style="left:596px;top:96px;width:1px;height:48px;background:#e3e3e3"></div>
<div class="a" style="left:669px;top:96px;width:1px;height:48px;background:#e3e3e3"></div>
<div class="a" style="left:742px;top:96px;width:1px;height:48px;background:#e3e3e3"></div>
<div class="a" style="left:815px;top:96px;width:1px;height:48px;background:#e3e3e3"></div>
<div class="a" style="left:888px;top:96px;width:1px;height:48px;background:#e3e3e3"></div>
<div class="a" style="left:243px;top:144px;width:646px;height:1px;background:#e5e5e5"></div>
<svg style="left:15px;top:16px" width="20" height="16" viewBox="15 16 20 16"><path d="M17.5 19.5H32.5M17.5 24H32.5M17.5 28.5H32.5" stroke="#1b1b1b" stroke-width="1" fill="none"/></svg>
<svg style="left:56px;top:16px" width="18" height="14" viewBox="56 16 18 14"><defs><linearGradient id="apg" x1="0" y1="0" x2="0" y2="1"><stop offset="0" stop-color="#10b8f5"/><stop offset="0.6" stop-color="#3fd3fb"/><stop offset="1" stop-color="#b5ecfd"/></linearGradient></defs>
<rect x="57.5" y="17.5" width="15" height="11" fill="#f3f3f3" stroke="#9c9c9c" stroke-width="1"/>
<path d="M58 24.3L59.5 25.3L61.5 19.3L62.8 22.5L64.5 23.3L66.5 25.3L67.3 25L68.2 20.2L69.2 20.5L70 23.4L71 23L72 23.6V28H58Z" fill="url(#apg)"/>
<path d="M58 24.3L59.5 25.3L61.5 19.3L62.8 22.5L64.5 23.3L66.5 25.3L67.3 25L68.2 20.2L69.2 20.5L70 23.4L71 23L72 23.6" fill="none" stroke="#0a74d0" stroke-width="0.9"/></svg>
<svg style="left:960px;top:5px" width="120" height="22" viewBox="960 5 120 22"><path d="M966 15.5H976" stroke="#1b1b1b" stroke-width="1"/>
<rect x="1011.5" y="10.5" width="9" height="9" rx="1.5" fill="none" stroke="#1b1b1b" stroke-width="1"/>
<path d="M1057 10L1067 20M1067 10L1057 20" stroke="#1b1b1b" stroke-width="1"/></svg>
<svg style="left:15px;top:54px" width="20" height="20" viewBox="15 54 20 20"><path d="M24.5 63.5V57.5M18.5 63.5H30.5V59A1.5 1.5 0 0 0 29 57.5H20A1.5 1.5 0 0 0 18.5 59V68A1.5 1.5 0 0 0 20 69.5H24.5V63.5" fill="none" stroke="#1b1b1b" stroke-width="1"/></svg>
<svg style="left:15px;top:94px" width="20" height="20" viewBox="15 94 20 20"><rect x="18.5" y="97.5" width="13" height="13" rx="2.5" fill="none" stroke="#1b1b1b" stroke-width="1"/><path d="M20.5 104.5H22.5L24 101.5L26 107L27.5 104.5H29.5" fill="none" stroke="#1b1b1b" stroke-width="1"/></svg>
<svg style="left:14px;top:132px" width="22" height="22" viewBox="14 132 22 22"><path d="M17.6 143.5A7.6 7.6 0 1 0 20.6 137.8" fill="none" stroke="#1b1b1b" stroke-width="1.15"/><path d="M18.5 136.3V140.4H22.6M18.6 140.3L20.8 138" fill="none" stroke="#1b1b1b" stroke-width="1.15"/><path d="M24.9 139.6V144.6H28" fill="none" stroke="#1b1b1b" stroke-width="1.15"/></svg>
<svg style="left:14px;top:174px" width="22" height="18" viewBox="14 174 22 18"><path d="M17.4 183.5A8.15 8.15 0 0 1 32.6 183.5" fill="none" stroke="#1b1b1b" stroke-width="1.15"/><path d="M17.6 183.6H20.2M32.4 183.6H29.8" fill="none" stroke="#1b1b1b" stroke-width="1.15"/><path d="M25 179V181" stroke="#8a8a8a" stroke-width="1"/><ellipse cx="26.3" cy="183.9" rx="1.5" ry="5.2" transform="rotate(24 26.3 183.9)" fill="none" stroke="#1b1b1b" stroke-width="1.15"/></svg>
<svg style="left:14px;top:213px" width="22" height="20" viewBox="14 213 22 20"><circle cx="22.45" cy="219.3" r="2.8" fill="none" stroke="#1b1b1b" stroke-width="1.15"/><path d="M18 224.5H27A0.5 0.5 0 0 1 27.5 225V225.5C27.5 228.5 25.5 230.3 22.5 230.3C19.5 230.3 17.5 228.5 17.5 225.5V225A0.5 0.5 0 0 1 18 224.5Z" fill="none" stroke="#1b1b1b" stroke-width="1.15"/><circle cx="29.5" cy="220.3" r="1.9" fill="none" stroke="#1b1b1b" stroke-width="1.15"/><path d="M29 224.5H31.5A1 1 0 0 1 32.5 225.5C32.5 228 31 229.6 28.5 229.8" fill="none" stroke="#1b1b1b" stroke-width="1.15"/></svg>
<svg style="left:14px;top:255px" width="22" height="16" viewBox="14 255 22 16"><path d="M17.2 258.5H18.7M17.2 263.5H18.7M17.2 267.5H18.7" stroke="#1b1b1b" stroke-width="1.4"/><path d="M21 258.5H33M21 263.5H33M21 267.5H33" stroke="#1b1b1b" stroke-width="1.05"/></svg>
<svg style="left:14px;top:292px" width="22" height="22" viewBox="14 292 22 22"><path d="M20.5 300A1.5 1.5 0 0 1 22 298.5H24A2 2 0 0 1 28 298.5H30A1.5 1.5 0 0 1 31.5 300V302A2 2 0 0 0 31.5 306V307.5A1.5 1.5 0 0 1 30 309H28A2 2 0 0 1 24 309H22A1.5 1.5 0 0 1 20.5 307.5V306A2 2 0 0 1 20.5 302Z" fill="none" stroke="#1b1b1b" stroke-width="1.15"/></svg>
<svg style="left:14.899999999999999px;top:759px" width="20" height="20" viewBox="14.899999999999999 759 20 20"><path d="M23.62 762.63L26.18 762.63L26.59 764.30A5.0 5.0 0 0 0 28.13 765.18L29.78 764.70L31.06 766.93L29.82 768.11A5.0 5.0 0 0 0 29.82 769.89L31.06 771.07L29.78 773.30L28.13 772.82A5.0 5.0 0 0 0 26.59 773.70L26.18 775.37L23.62 775.37L23.21 773.70A5.0 5.0 0 0 0 21.67 772.82L20.02 773.30L18.74 771.07L19.98 769.89A5.0 5.0 0 0 0 19.98 768.11L18.74 766.93L20.02 764.70L21.67 765.18A5.0 5.0 0 0 0 23.21 764.30Z" fill="none" stroke="#1b1b1b" stroke-width="1.05" stroke-linejoin="round"/><circle cx="24.9" cy="769" r="1.7" fill="none" stroke="#1b1b1b" stroke-width="1.2"/></svg>
<svg style="left:578px;top:61px" width="20" height="20" viewBox="578 61 20 20"><path d="M586.5 69.5V63.5M580.5 69.5H586.5M592.5 68V65A1.5 1.5 0 0 0 591 63.5H582A1.5 1.5 0 0 0 580.5 65V74A1.5 1.5 0 0 0 582 75.5H585.5" fill="none" stroke="#1b1b1b" stroke-width="1.1"/><circle cx="590.6" cy="73.3" r="4.6" fill="#1b1b1b"/><path d="M590.6 71V75.6M588.3 73.3H592.9" stroke="#fff" stroke-width="1"/></svg>
<svg style="left:740px;top:60px" width="20" height="20" viewBox="740 60 20 20"><path d="M742.6 70.5A7.4 7.4 0 1 0 745.5 64.2" fill="none" stroke="#1b1b1b" stroke-width="1.1"/><path d="M743.4 62V66.6H747.8M743.5 66.5L745.9 64" fill="none" stroke="#1b1b1b" stroke-width="1.1"/></svg>
<svg style="left:862px;top:60px" width="24" height="20" viewBox="862 60 24 20"><path d="M875.5 65.3H881A1.5 1.5 0 0 1 882.5 66.8V71C882.5 73.5 880.5 75.3 878 75.3H876.5C874.5 75.3 873.3 73.5 873.3 71.5V69.5C873.3 67.5 874 66 875.5 65.3Z" fill="none" stroke="#8a8a8a" stroke-width="1.0"/><path d="M872.5 72.4C869.5 72.4 867.4 70.5 867.4 68V64.5A1.2 1.2 0 0 1 868.6 63.3H873.5C874.5 63.3 875 64 875.5 65.3" fill="none" stroke="#8a8a8a" stroke-width="1.0"/><path d="M870.3 66L872.6 68.7M874.5 66.3L872.6 68.7V73.5M871.3 76.5L877.6 70.2" fill="none" stroke="#8a8a8a" stroke-width="1.0"/></svg>
<svg style="left:1058px;top:66px" width="10" height="8" viewBox="1058 66 10 8"><path d="M1060.3 68.5L1063 71.3L1065.7 68.5" fill="none" stroke="#7a7a7a" stroke-width="1"/></svg>
<svg style="left:348px;top:100px" width="14" height="10" viewBox="348 100 14 10"><path d="M350.6 106.2L354.5 103.4L358.4 106.2" fill="none" stroke="#7a7a7a" stroke-width="1.5"/></svg>
<div class="t" style="left:85.37px;top:18px;font-size:12px;line-height:12px;color:#202020;letter-spacing:-0.071px;will-change:transform">Administrador de tareas</div>
<div class="t" style="left:48.84px;top:58px;font-size:14px;line-height:14px;color:#262626;letter-spacing:-0.457px;will-change:transform">Procesos</div>
<div class="t" style="left:48.84px;top:98px;font-size:14px;line-height:14px;color:#262626;letter-spacing:0.034px;will-change:transform">Rendimiento</div>
<div class="t" style="left:48.84px;top:138px;font-size:14px;line-height:14px;color:#262626;letter-spacing:-0.055px;will-change:transform">Historial de aplicaciones</div>
<div class="t" style="left:49.97px;top:178px;font-size:14px;line-height:14px;color:#262626;letter-spacing:-0.133px;will-change:transform">Aplicaciones de arranque</div>
<div class="t" style="left:48.91px;top:218px;font-size:14px;line-height:14px;color:#262626;letter-spacing:-0.322px;will-change:transform">Usuarios</div>
<div class="t" style="left:48.84px;top:258px;font-size:14px;line-height:14px;color:#262626;letter-spacing:-0.219px;will-change:transform">Detalles</div>
<div class="t" style="left:49.37px;top:298px;font-size:14px;line-height:14px;color:#262626;letter-spacing:-0.423px;will-change:transform">Servicios</div>
<div class="t" style="left:49.30px;top:763px;font-size:14px;line-height:14px;color:#262626;letter-spacing:0.041px;will-change:transform">Configuración</div>
<div class="t" style="left:257.65px;top:64px;font-size:14px;line-height:14px;color:#262626;letter-spacing:-0.200px;-webkit-text-stroke:0.45px #262626;will-change:transform">Procesos</div>
<div class="t" style="left:602.91px;top:65px;font-size:12px;line-height:12px;color:#262626;letter-spacing:-0.077px;will-change:transform">Ejecutar nueva tarea</div>
<div class="t" style="left:765.71px;top:65px;font-size:12px;line-height:12px;color:#262626;letter-spacing:-0.094px;will-change:transform">Reiniciar tarea</div>
<div class="t" style="left:890.61px;top:65px;font-size:12px;line-height:12px;color:#9a9a9a;letter-spacing:0.159px;will-change:transform">Modo de eficiencia</div>
<div class="t" style="left:1027.04px;top:65px;font-size:12px;line-height:12px;color:#262626;letter-spacing:-0.232px;will-change:transform">Vista</div>
<div class="t" style="left:257.61px;top:127px;font-size:12px;line-height:12px;color:#5f5f5f;letter-spacing:0.428px">Nombre</div>
<div class="t" style="left:482.21px;top:127px;font-size:12px;line-height:12px;color:#5f5f5f;letter-spacing:-0.316px">Estado</div>
<div class="t" style="left:631.94px;top:105px;font-size:15px;line-height:15px;color:#1b1b1b;letter-spacing:0.525px">31%</div>
<div class="t" style="left:704.45px;top:105px;font-size:15px;line-height:15px;color:#1b1b1b;letter-spacing:0.869px">62%</div>
<div class="t" style="left:787.48px;top:105px;font-size:15px;line-height:15px;color:#1b1b1b;letter-spacing:-0.025px">1%</div>
<div class="t" style="left:860.30px;top:105px;font-size:15px;line-height:15px;color:#1b1b1b;letter-spacing:0.450px">0%</div>
<div class="t" style="left:640.20px;top:127px;font-size:12px;line-height:12px;color:#5f5f5f;letter-spacing:-1.060px">CPU</div>
<div class="t" style="left:687.71px;top:127px;font-size:12px;line-height:12px;color:#5f5f5f;letter-spacing:0.218px">Memoria</div>
<div class="t" style="left:779.71px;top:127px;font-size:12px;line-height:12px;color:#5f5f5f;letter-spacing:-0.158px">Disco</div>
<div class="t" style="left:861.61px;top:127px;font-size:12px;line-height:12px;color:#5f5f5f;letter-spacing:-0.475px">Red</div>
<div class="t" style="left:258.26px;top:375px;font-size:15px;line-height:15px;color:#1b1b1b;letter-spacing:0.265px">Procesos de Windows (97)</div>
<div class="a" style="left:1076px;top:345px;width:2px;height:94px;background:#858585;border-radius:1px"></div>
<svg style="left:1022px;top:730px" width="60" height="60" viewBox="1022 730 60 60"><circle cx="1052" cy="759" r="26" fill="none" stroke="#e6edf3" stroke-width="1"/>
<path d="M1069 741A26 26 0 0 1 1070 778" fill="none" stroke="#dde2e6" stroke-width="2.2"/>
<path d="M1050.5 768.5C1048 764 1043 762.5 1039.5 761.5C1035 760.5 1033.5 756 1034 751C1035 743 1042 737.5 1051 737.5C1059 737.5 1063.5 742.5 1063 748C1062.5 753 1059.5 758 1059 763C1058.8 765 1060 766 1060 767C1058 768.5 1053 770 1052 772.5C1051.5 774 1055 773.5 1059 772C1063 770.5 1065 772 1063 774C1061 776 1057 777.5 1054.5 779" fill="none" stroke="#68a3da" stroke-width="2" stroke-linecap="round"/></svg>
</body></html>
